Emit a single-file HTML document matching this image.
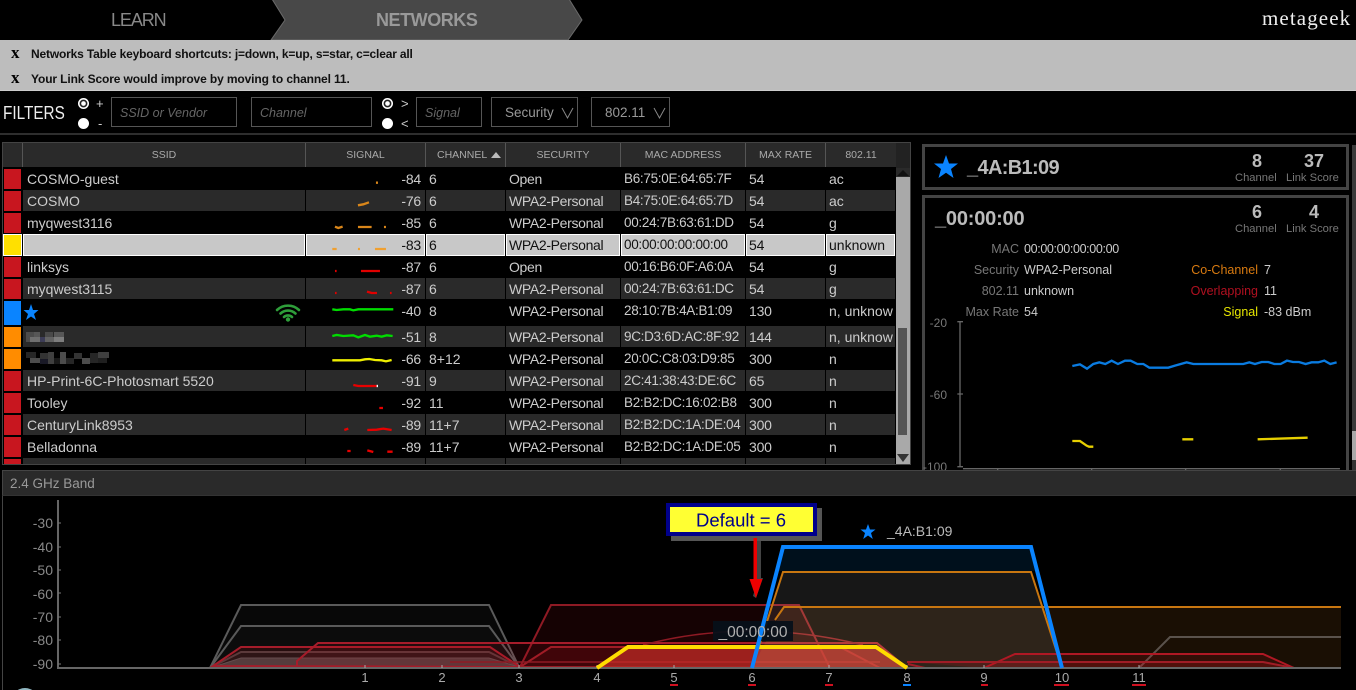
<!DOCTYPE html>
<html><head><meta charset="utf-8"><title>Networks</title>
<style>
*{box-sizing:border-box}
html,body{margin:0;padding:0;background:#000;width:1356px;height:690px;overflow:hidden}
body{position:relative;font-family:"Liberation Sans",Arial,sans-serif}
.a{position:absolute;white-space:nowrap}
.inp{position:absolute;top:97px;height:30px;border:1px solid #555;color:#666;font-size:12.5px;line-height:30px;padding-left:8px;font-style:italic;white-space:nowrap}
.sel{font-style:normal;color:#999;font-size:13.500px;padding-left:13px}
.rad{position:absolute;width:11px;height:11px;border-radius:50%;background:#fff}
.on{background:radial-gradient(circle at center,#fff 0 2px,#222 2.6px 3.6px,#fff 4.2px)}
.h{position:absolute;top:143px;height:24px;background:#2a2a2a;color:#aaa;font-size:10.5px;line-height:25px;text-align:center;border-right:1px solid #555}
#t{position:absolute;left:3px;top:168px;width:893px;height:296px;overflow:hidden}
.r{position:absolute;left:0;width:893px;font-size:14px;color:#ccc;line-height:22px}
.r>i{position:absolute;left:1px;top:1px;width:17px;height:20px;background:#c8161f}
.r>b{position:absolute;top:0;height:21px;background:#2a2a2a;font-weight:normal}
.r>span{position:absolute;top:0;white-space:nowrap}
.g1{left:20px;width:282px}.g2{left:303px;width:119px}.g3{left:423px;width:79px}.g4{left:503px;width:114px}.g5{left:618px;width:124px}.g6{left:743px;width:79px}.g7{left:823px;width:69px}
.s1{left:24px;letter-spacing:0}
.s2{left:370px;width:48px;text-align:right;letter-spacing:-.2px}
.s3{left:426px}
.s4{left:506px;letter-spacing:-.33px}
.s5{left:621px;font-size:13.5px;letter-spacing:-.3px}
.s6{left:746px;letter-spacing:-.2px}
.s7{left:826px;width:64px;overflow:hidden}
.sl>b{background:#c8c8c8;border:1px solid #fff;height:22px}
.sl{color:#111}
.sl>i{background:#ffe000;left:0;top:0;width:19px;height:22px;border:1px solid #fff}
.lbl{position:absolute;font-size:12.5px;color:#777;text-align:right;width:110px;white-space:nowrap}
.val{position:absolute;font-size:12.5px;color:#ccc;white-space:nowrap}
.num{position:absolute;font-size:18px;font-weight:bold;color:#bbb;text-align:center;width:40px}
.sm{position:absolute;font-size:11.2px;color:#777;white-space:nowrap}
</style></head><body>

<svg class="a" style="left:0;top:0" width="600" height="40"><polygon points="272,-1 285,20 271,40 568,40 582,20 569,-1" fill="#484848" stroke="#6a6a6a"/></svg>
<div class="a" style="left:111px;top:9px;font-size:18px;color:#888;line-height:22px;letter-spacing:-1.1px">LEARN</div>
<div class="a" style="left:376px;top:9px;font-size:18px;font-weight:bold;color:#999;line-height:22px;letter-spacing:-.45px">NETWORKS</div>
<div class="a" style="left:1262px;top:5px;font:21px/26px 'Liberation Serif',serif;color:#eee;letter-spacing:1.1px">metageek</div>

<div class="a" style="left:0;top:40px;width:1356px;height:51px;background:#bdbdbd;border-bottom:1px solid #ccc"></div>
<div class="a" style="left:11px;top:44px;font:bold 17px/18px 'Liberation Serif',serif;color:#000">x</div>
<div class="a" style="left:31px;top:46px;font-size:12px;font-weight:bold;color:#111;line-height:16px;letter-spacing:-.17px">Networks Table keyboard shortcuts: j=down, k=up, s=star, c=clear all</div>
<div class="a" style="left:11px;top:69px;font:bold 17px/18px 'Liberation Serif',serif;color:#000">x</div>
<div class="a" style="left:31px;top:71px;font-size:12px;font-weight:bold;color:#111;line-height:16px;letter-spacing:-.12px">Your Link Score would improve by moving to channel 11.</div>

<div class="a" style="left:3px;top:102px;font-size:18px;color:#eee;line-height:22px;transform:scaleX(.85);transform-origin:left center">FILTERS</div>
<div class="rad on" style="left:78px;top:98px"></div><div class="rad" style="left:78px;top:118px"></div>
<div class="a" style="left:96px;top:96px;color:#ccc;font-size:13px">+</div><div class="a" style="left:98px;top:116px;color:#ccc;font-size:13px">-</div>
<div class="inp" style="left:111px;width:126px">SSID or Vendor</div>
<div class="inp" style="left:251px;width:121px">Channel</div>
<div class="rad on" style="left:382px;top:98px"></div><div class="rad" style="left:382px;top:118px"></div>
<div class="a" style="left:401px;top:96px;color:#ccc;font-size:13px">&gt;</div><div class="a" style="left:401px;top:116px;color:#ccc;font-size:13px">&lt;</div>
<div class="inp" style="left:416px;width:66px">Signal</div>
<div class="inp sel" style="left:491px;width:87px">Security</div>
<div class="inp sel" style="left:591px;width:79px">802.11</div>
<svg class="a" style="left:0;top:90px" width="700" height="40"><path d="M562 18l5.500 10 5.500-10M654 18l5.500 10 5.500-10" fill="none" stroke="#888"/></svg>
<div class="a" style="left:0;top:133px;width:1356px;height:2px;background:#2e2e2e"></div>

<!-- table -->
<div class="a" style="left:2px;top:142px;width:909px;height:323px;border:1px solid #444"></div>
<div class="h" style="left:3px;width:20px"></div>
<div class="h" style="left:23px;width:283px">SSID</div>
<div class="h" style="left:306px;width:120px">SIGNAL</div>
<div class="h" style="left:426px;width:80px;text-align:left;padding-left:11px">CHANNEL</div>
<svg class="a" style="left:491px;top:151px" width="11" height="8"><polygon points="0,7 5,1 10,7" fill="#bbb"/></svg>
<div class="h" style="left:506px;width:115px">SECURITY</div>
<div class="h" style="left:621px;width:125px">MAC ADDRESS</div>
<div class="h" style="left:746px;width:80px">MAX RATE</div>
<div class="h" style="left:826px;width:70px;border-right:0">802.11</div>
<div class="a" style="left:896px;top:143px;width:14px;height:25px;background:#222"></div>

<div id="t">
<div class="r" style="top:0"><i></i><span class="s1">COSMO-guest</span><span class="s2">-84</span><span class="s3">6</span><span class="s4">Open</span><span class="s5">B6:75:0E:64:65:7F</span><span class="s6">54</span><span class="s7">ac</span></div>
<div class="r" style="top:22px"><i></i><b class="g1"></b><b class="g2"></b><b class="g3"></b><b class="g4"></b><b class="g5"></b><b class="g6"></b><b class="g7"></b><span class="s1">COSMO</span><span class="s2">-76</span><span class="s3">6</span><span class="s4">WPA2-Personal</span><span class="s5">B4:75:0E:64:65:7D</span><span class="s6">54</span><span class="s7">ac</span></div>
<div class="r" style="top:44px"><i></i><span class="s1">myqwest3116</span><span class="s2">-85</span><span class="s3">6</span><span class="s4">WPA2-Personal</span><span class="s5">00:24:7B:63:61:DD</span><span class="s6">54</span><span class="s7">g</span></div>
<div class="r sl" style="top:66px"><i></i><b class="g1"></b><b class="g2"></b><b class="g3"></b><b class="g4"></b><b class="g5"></b><b class="g6"></b><b class="g7"></b><span class="s2">-83</span><span class="s3">6</span><span class="s4">WPA2-Personal</span><span class="s5">00:00:00:00:00:00</span><span class="s6">54</span><span class="s7">unknown</span></div>
<div class="r" style="top:88px"><i></i><span class="s1">linksys</span><span class="s2">-87</span><span class="s3">6</span><span class="s4">Open</span><span class="s5">00:16:B6:0F:A6:0A</span><span class="s6">54</span><span class="s7">g</span></div>
<div class="r" style="top:110px"><i></i><b class="g1"></b><b class="g2"></b><b class="g3"></b><b class="g4"></b><b class="g5"></b><b class="g6"></b><b class="g7"></b><span class="s1">myqwest3115</span><span class="s2">-87</span><span class="s3">6</span><span class="s4">WPA2-Personal</span><span class="s5">00:24:7B:63:61:DC</span><span class="s6">54</span><span class="s7">g</span></div>
<div class="r" style="top:132px"><i style="background:#0a84ff;height:24px"></i><span class="s2">-40</span><span class="s3">8</span><span class="s4">WPA2-Personal</span><span class="s5">28:10:7B:4A:B1:09</span><span class="s6">130</span><span class="s7">n, unknown</span></div>
<div class="r" style="top:158px"><i style="background:#ff8c00"></i><b class="g1"></b><b class="g2"></b><b class="g3"></b><b class="g4"></b><b class="g5"></b><b class="g6"></b><b class="g7"></b><span class="s2">-51</span><span class="s3">8</span><span class="s4">WPA2-Personal</span><span class="s5">9C:D3:6D:AC:8F:92</span><span class="s6">144</span><span class="s7">n, unknown</span></div>
<div class="r" style="top:180px"><i style="background:#ff8c00"></i><span class="s2">-66</span><span class="s3">8+12</span><span class="s4">WPA2-Personal</span><span class="s5">20:0C:C8:03:D9:85</span><span class="s6">300</span><span class="s7">n</span></div>
<div class="r" style="top:202px"><i></i><b class="g1"></b><b class="g2"></b><b class="g3"></b><b class="g4"></b><b class="g5"></b><b class="g6"></b><b class="g7"></b><span class="s1">HP-Print-6C-Photosmart 5520</span><span class="s2">-91</span><span class="s3">9</span><span class="s4">WPA2-Personal</span><span class="s5">2C:41:38:43:DE:6C</span><span class="s6">65</span><span class="s7">n</span></div>
<div class="r" style="top:224px"><i></i><span class="s1">Tooley</span><span class="s2">-92</span><span class="s3">11</span><span class="s4">WPA2-Personal</span><span class="s5">B2:B2:DC:16:02:B8</span><span class="s6">300</span><span class="s7">n</span></div>
<div class="r" style="top:246px"><i></i><b class="g1"></b><b class="g2"></b><b class="g3"></b><b class="g4"></b><b class="g5"></b><b class="g6"></b><b class="g7"></b><span class="s1">CenturyLink8953</span><span class="s2">-89</span><span class="s3">11+7</span><span class="s4">WPA2-Personal</span><span class="s5">B2:B2:DC:1A:DE:04</span><span class="s6">300</span><span class="s7">n</span></div>
<div class="r" style="top:268px"><i></i><span class="s1">Belladonna</span><span class="s2">-89</span><span class="s3">11+7</span><span class="s4">WPA2-Personal</span><span class="s5">B2:B2:DC:1A:DE:05</span><span class="s6">300</span><span class="s7">n</span></div>
<div class="r" style="top:290px"><i></i><b class="g1"></b><b class="g2"></b><b class="g3"></b><b class="g4"></b><b class="g5"></b><b class="g6"></b><b class="g7"></b></div>
</div>

<!-- sparklines, star, wifi, blurred names -->
<svg class="a" style="left:0;top:0" width="920" height="470">
<g transform="translate(0,140) scale(.3333)" fill="none" stroke-width="7">
<path d="M1128 128h6M1074 196l16-3 17-6M1005 260l10 4 13-4M1074 261h41M1152 261h6" stroke="#d9861a"/>
<path d="M997 327h13M1074 327h6M1125 327h33" stroke="#f0a030"/>
<path d="M1005 393h5M1083 393h57M1005 459h5M1101 455l14 4h16M1170 459h5" stroke="#e00000"/>
</g>
<g transform="translate(0,300) scale(.3333)" fill="none" stroke-width="7">
<path d="M997 28l13 2 20-2h20l10 3 15-3h105" stroke="#0d0"/>
<path d="M997 108l13-3 20 3 30-2 15 6 20-7 15 5 20-3 15 3 15-4 18 2" stroke="#0d0"/>
<path d="M997 181h83l15-3 13-1 17 3 20 1 13 3 17-4" stroke="#eeee00"/>
<path d="M1060 255l15 3h55M1138 324h11M1033 390l12-4M1102 390l28-1 20-3 25 4M1042 453h10M1102 451l18 5M1162 455h16" stroke="#e80000"/>
<path d="M1130 258h4" stroke="#fff"/>
</g>
<polygon points="31,304 33,310 38.500,310 34,314 36,320 31,316.500 26,320 28,314 23.500,310 29,310" fill="#0a84ff"/>
<g fill="none" stroke="#2e9e3a" stroke-width="2.600" stroke-linecap="round">
<path d="M277 310a16 16 0 0 1 22 0M280.500 313.500a11 11 0 0 1 15 0M284 317a6 6 0 0 1 8 0"/>
</g><circle cx="288" cy="319.500" r="2.200" fill="#2e9e3a"/>
<g opacity=".75">
<rect x="26" y="332" width="8" height="10" fill="#777" opacity=".6"/><rect x="34" y="332" width="6" height="5" fill="#666"/><rect x="30" y="337" width="10" height="5" fill="#888"/><rect x="40" y="337" width="5" height="5" fill="#446"/><rect x="45" y="332" width="8" height="5" fill="#555"/><rect x="45" y="337" width="9" height="5" fill="#777"/><rect x="54" y="332" width="10" height="5" fill="#666"/><rect x="54" y="337" width="10" height="5" fill="#999"/>
<rect x="26" y="352" width="10" height="6" fill="#333"/><rect x="30" y="358" width="10" height="5" fill="#666"/><rect x="40" y="353" width="8" height="6" fill="#444"/><rect x="40" y="359" width="8" height="5" fill="#223"/><rect x="48" y="352" width="6" height="12" fill="#555"/><rect x="54" y="358" width="6" height="6" fill="#222"/><rect x="60" y="352" width="6" height="12" fill="#666"/><rect x="66" y="358" width="8" height="6" fill="#333"/><rect x="74" y="353" width="8" height="6" fill="#444"/><rect x="82" y="358" width="8" height="6" fill="#666"/><rect x="90" y="353" width="8" height="10" fill="#333"/><rect x="98" y="352" width="11" height="6" fill="#555"/><rect x="98" y="358" width="9" height="5" fill="#2a2a2a"/>
</g>
</svg>

<!-- table scrollbar -->
<div class="a" style="left:896px;top:168px;width:14px;height:296px;background:#a9a9a9"></div>
<div class="a" style="left:898px;top:328px;width:9px;height:107px;background:#555"></div>
<svg class="a" style="left:896px;top:168px" width="14" height="296"><rect width="14" height="9" fill="#2a2a2a"/><polygon points="1,8 7,2 13,8" fill="#111"/><polygon points="1,286 13,286 7,294" fill="#333"/></svg>

<!-- right scrollbar -->
<div class="a" style="left:1352px;top:145px;width:4px;height:286px;background:#3a3a3a"></div>
<div class="a" style="left:1352px;top:431px;width:4px;height:30px;background:#a9a9a9"></div>
<div class="a" style="left:1352px;top:460px;width:4px;height:10px;background:#333"></div>

<!-- right panel -->
<div class="a" style="left:922px;top:144px;width:427px;height:46px;border:3px solid #444"></div>
<svg class="a" style="left:934px;top:154px" width="25" height="25"><polygon points="12,1 15,9.500 24,9.500 17,15 19.500,24 12,18.800 4.500,24 7,15 0,9.500 9,9.500" fill="#0a84ff"/></svg>
<div class="a" style="left:967px;top:155px;font-size:20px;font-weight:bold;color:#bbb;line-height:26px;letter-spacing:-.65px">_4A:B1:09</div>
<div class="num" style="left:1237px;top:151px">8</div>
<div class="num" style="left:1294px;top:151px">37</div>
<div class="sm" style="left:1235px;top:172px">Channel</div>
<div class="sm" style="left:1286px;top:172px">Link Score</div>

<div class="a" style="left:922px;top:195px;width:427px;height:280px;border:3px solid #444"></div>
<div class="a" style="left:935px;top:206px;font-size:20px;font-weight:bold;color:#bbb;line-height:26px;letter-spacing:-.2px">_00:00:00</div>
<div class="num" style="left:1237px;top:202px">6</div>
<div class="num" style="left:1294px;top:202px">4</div>
<div class="sm" style="left:1235px;top:223px">Channel</div>
<div class="sm" style="left:1286px;top:223px">Link Score</div>
<div class="lbl" style="left:909px;top:242px">MAC</div><div class="val" style="left:1024px;top:242px;letter-spacing:-.35px">00:00:00:00:00:00</div>
<div class="lbl" style="left:909px;top:263px">Security</div><div class="val" style="left:1024px;top:263px">WPA2-Personal</div>
<div class="lbl" style="left:909px;top:284px">802.11</div><div class="val" style="left:1024px;top:284px">unknown</div>
<div class="lbl" style="left:909px;top:305px">Max Rate</div><div class="val" style="left:1024px;top:305px">54</div>
<div class="lbl" style="left:1148px;top:263px;color:#d87a10">Co-Channel</div><div class="val" style="left:1264px;top:263px">7</div>
<div class="lbl" style="left:1148px;top:284px;color:#b01020">Overlapping</div><div class="val" style="left:1264px;top:284px">11</div>
<div class="lbl" style="left:1148px;top:305px;color:#e6e600">Signal</div><div class="val" style="left:1264px;top:305px">-83 dBm</div>

<svg class="a" style="left:915px;top:300px" width="436" height="180">
<g transform="scale(.3333)" fill="none">
<path d="M135 65V500M127 65h17M127 282h17M127 500h17M144 506H1275M248 506v5M530 506v5M812 506v5M1096 506v5" stroke="#666" stroke-width="4"/>
<path d="M472 198l23-5 21 13 19-14 18-5 18 5 19-10 19 10 21-10h17l20 10h18l18 11h57l20-6 35-10 20 5h150l18-5 17 5 20-6h20l18 6h19l19-10 18 4h18l20 6 18-5h20l18-5 18 10 19-5" stroke="#0a7be0" stroke-width="7"/>
<path d="M472 423h23l20 14 7 3h13M802 418h33M1028 418l150-5" stroke="#e6cf00" stroke-width="7"/>
</g>
<text x="32" y="27" fill="#777" font-size="12" text-anchor="end">-20</text>
<text x="32" y="99" fill="#777" font-size="12" text-anchor="end">-60</text>
<text x="32" y="171" fill="#777" font-size="12" text-anchor="end">-100</text>
</svg>

<!-- band panel -->
<div class="a" style="left:2px;top:470px;width:1354px;height:26px;background:#2a2a2a;border-top:1px solid #444;border-left:1px solid #444;border-bottom:1px solid #333;color:#999;font-size:13.500px;line-height:26px;padding-left:7px">2.4 GHz Band</div>
<div class="a" style="left:2px;top:496px;width:1px;height:194px;background:#444"></div>

<svg class="a" style="left:0;top:496px" width="1356" height="194" viewBox="0 496 1356 194">
<circle cx="25" cy="702" r="14" fill="#8fb6c0"/>
<!-- gray left -->
<path d="M210 668L241 605H489L519 667Z" fill="rgba(255,255,255,.03)" stroke="#5a5a5a" stroke-width="2"/>
<path d="M210 668L241 626H489L519 667Z" fill="rgba(255,255,255,.02)" stroke="#5a5a5a" stroke-width="2"/>
<path d="M210 668L241 652H489L519 667Z" fill="rgba(255,255,255,.04)" stroke="#4a4040" stroke-width="2"/>
<path d="M210 668L241 658H489L519 667Z" fill="rgba(255,255,255,.2)" stroke="#555" stroke-width="1"/>
<!-- red -->
<path d="M520 667L551 605H799L830 668Z" fill="rgba(210,20,30,.1)" stroke="#8e1a24" stroke-width="2"/>
<path d="M213 666L241 647H490L520 667Z" fill="rgba(200,20,30,.14)" stroke="#a61c2a" stroke-width="2"/>
<path d="M297 661L318 643H877L907 668H297Z" fill="rgba(200,20,30,.12)" stroke="#a61c2a" stroke-width="2"/>
<path d="M520 667L551 647H840L880 668Z" fill="rgba(200,20,30,.14)" stroke="#a01c26" stroke-width="2"/>
<path d="M450 662H880" stroke="#8e1a24" stroke-width="1.500"/>
<path d="M643 645Q750 617 863 645" fill="rgba(220,40,30,.05)" stroke="#8e1a24" stroke-width="1.500"/>
<!-- selected yellow -->
<path d="M597 668L628 647H876L907 668Z" fill="rgba(200,45,40,.68)"/>
<!-- orange -->
<path d="M752 668L784 607H1341V668Z" fill="rgba(255,150,40,.1)"/>
<path d="M752 668L783 572H1031L1062 668Z" fill="rgba(255,255,255,.09)"/>
<path d="M775 620L784 607H1341" fill="none" stroke="#c87610" stroke-width="2"/>
<path d="M752 668L783 572H1031L1062 668" fill="none" stroke="#c87610" stroke-width="2"/>
<polygon points="783,549 1031,549 1037,571 777,571" fill="#00101c"/>
<!-- right traces -->
<path d="M1139 668L1170 637H1341" fill="none" stroke="#5a524c" stroke-width="2"/>
<path d="M984 668L1015 654H1263L1294 668Z" fill="rgba(200,20,30,.14)" stroke="#b01824" stroke-width="2"/>
<path d="M907 662H1263L1294 668H984" fill="rgba(200,20,30,.2)" stroke="#a01c26" stroke-width="2"/>
<path d="M908 664L925 668" stroke="#a01c26" stroke-width="2"/>
<!-- axes -->
<path d="M58 500V669M58 668H1341" fill="none" stroke="#666" stroke-width="2"/>
<path d="M58 523h3M58 547h3M58 570h3M58 593h3M58 617h3M58 640h3M58 664h3" stroke="#777"/>
<path d="M365 665v3M442 665v3M519 665v3M597 665v3M674 665v3M752 665v3M829 665v3M907 665v3M984 665v3M1062 665v3M1139 665v3" stroke="#aaa" stroke-width="1"/>
<g fill="#888" font-size="14" text-anchor="end" font-family="Liberation Sans,Arial,sans-serif">
<text x="53" y="528">-30</text><text x="53" y="552">-40</text><text x="53" y="575">-50</text><text x="53" y="599">-60</text><text x="53" y="622">-70</text><text x="53" y="645">-80</text><text x="53" y="669">-90</text>
</g>
<g fill="#aaa" font-size="13" text-anchor="middle" font-family="Liberation Sans,Arial,sans-serif">
<text x="365" y="682">1</text><text x="442" y="682">2</text><text x="519" y="682">3</text><text x="597" y="682">4</text><text x="674" y="682">5</text><text x="752" y="682">6</text><text x="829" y="682">7</text><text x="907" y="682">8</text><text x="984" y="682">9</text><text x="1062" y="682">10</text><text x="1139" y="682">11</text>
</g>
<path d="M670 685h8M748 685h8M825 685h8M981 685h7M1054 685h15M1132 685h14" stroke="#d01020" stroke-width="2"/>
<path d="M903 685h8" stroke="#0a84ff" stroke-width="2"/>
<!-- tooltip -->
<rect x="713" y="621" width="80" height="20" fill="#06101a" opacity=".93"/>
<!-- yellow + blue -->
<path d="M597 668L628 647H876L907 668" fill="none" stroke="#ffdc00" stroke-width="4"/>
<path d="M752 668L783 547H1031L1062 668" fill="none" stroke="#0a84ff" stroke-width="4"/>
<text x="753" y="637" fill="#b0b0b0" font-size="15.500" text-anchor="middle" font-family="Liberation Sans,Arial,sans-serif">_00:00:00</text>
<polygon points="868,524 870,529.500 875.500,529.500 871,533 872.800,539 868,535.500 863.200,539 865,533 860.500,529.500 866,529.500" fill="#0a84ff"/>
<text x="887" y="536" fill="#bbb" font-size="14" font-family="Liberation Sans,Arial,sans-serif">_4A:B1:09</text>
<!-- callout -->
<rect x="671" y="508" width="151" height="33" fill="#555"/>
<path d="M757 541h4v37h2l-7 20-3-2 4-14z" fill="#444"/>
<rect x="668" y="505" width="147" height="29" fill="#ffff33" stroke="#00008b" stroke-width="4"/>
<text x="741" y="526.500" fill="#00008b" font-size="18.500" text-anchor="middle" font-family="Liberation Sans,Arial,sans-serif">Default = 6</text>
<path d="M753.500 538h3.500v41h5.500l-6.500 19-6.500-19h4z" fill="#f00000"/>
</svg>

</body></html>
